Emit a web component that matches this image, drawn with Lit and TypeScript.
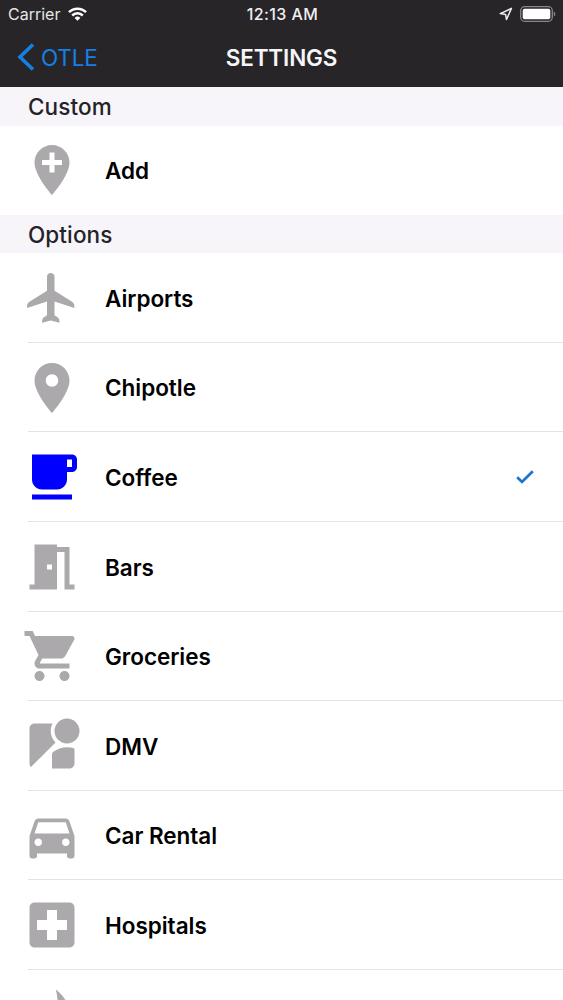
import { LitElement, html, css } from "lit";
import { customElement } from "lit/decorators.js";
import { classMap } from "lit/directives/class-map.js";

const icons: Record<string, string> = {
  add: "M12 2C8.14 2 5 5.14 5 9c0 5.25 7 13 7 13s7-7.75 7-13c0-3.86-3.14-7-7-7zm4 8h-3v3h-2v-3H8V8h3V5h2v3h3v2z",
  plane: "M21 16c0-1.5-.3-2.100-1.300-2.700L13 9.100V3.500C13 2.670 12.330 2 11.500 2S10 2.670 10 3.500v5.600l-6.700 4.200C2.300 13.900 2 14.500 2 16l8-2.600V18.900l-1.200.8c-.6.400-.8.900-.8 2.200l3.500-.9 3.500.9c0-1.300-.2-1.800-.8-2.200L13 18.900v-5.500z",
  pin: "M12 2C8.13 2 5 5.13 5 9c0 5.25 7 13 7 13s7-7.75 7-13c0-3.87-3.13-7-7-7zm0 9.5c-1.38 0-2.5-1.12-2.5-2.5s1.12-2.5 2.5-2.5 2.5 1.12 2.5 2.5-1.12 2.5-2.5 2.5z",
  cup: "M20 3H4v10c0 2.21 1.79 4 4 4h6c2.21 0 4-1.79 4-4v-3h2c1.11 0 2-.9 2-2V5c0-1.11-.89-2-2-2zm0 5h-2V5h2v3zM4 19h16v2H4z",
  door: "M14 6v15H3v-2h2V3h9v1h5v15h2v2h-4V6h-3zm-4 5v2h2v-2h-2z",
  cart: "M7 18c-1.1 0-1.99.9-1.99 2S5.9 22 7 22s2-.9 2-2-.9-2-2-2zM1 2v2h2l3.6 7.59-1.35 2.45c-.16.28-.25.61-.25.96 0 1.1.9 2 2 2h12v-2H7.42c-.14 0-.25-.11-.25-.25l.03-.12.9-1.63h7.45c.75 0 1.41-.41 1.75-1.03l3.58-6.49c.08-.14.12-.31.12-.48 0-.55-.45-1-1-1H5.21l-.94-2H1zm16 16c-1.1 0-1.99.9-1.99 2s.89 2 1.99 2 2-.9 2-2-.9-2-2-2z",
  person: "M12.56 14.33c-.34.27-.56.7-.56 1.17V21h7c1.1 0 2-.9 2-2v-5.98c-.94-.33-1.95-.52-3-.52-2.03 0-3.93.7-5.44 1.83zM23 6a5 5 0 1 1-10 0 5 5 0 0 1 10 0zM11.5 6c0-1.08.27-2.1.74-3H5c-1.1 0-2 .9-2 2v14c0 .55.23 1.05.59 1.41l9.82-9.82C12.23 9.42 11.5 7.8 11.5 6z",
  car: "M18.92 6.01C18.72 5.42 18.16 5 17.5 5h-11c-.66 0-1.21.42-1.42 1.01L3 12v8c0 .55.45 1 1 1h1c.55 0 1-.45 1-1v-1h12v1c0 .55.45 1 1 1h1c.55 0 1-.45 1-1v-8l-2.08-5.99zM6.5 16c-.83 0-1.5-.67-1.5-1.5S5.67 13 6.5 13s1.5.67 1.5 1.5S7.33 16 6.5 16zm11 0c-.83 0-1.5-.67-1.5-1.5s.67-1.5 1.5-1.5 1.5.67 1.5 1.5-.67 1.5-1.5 1.5zM5 11l1.500-4.500h11L19 11H5z",
  hospital: "M19 3H5c-1.1 0-1.99.9-1.99 2L3 19c0 1.1.9 2 2 2h14c1.1 0 2-.9 2-2V5c0-1.1-.9-2-2-2zm-1 11h-4v4h-4v-4H6v-4h4V6h4v4h4v4z",
  flame: "M13.5 1.67s.74 2.65.74 4.8c0 2.06-1.35 3.73-3.41 3.73-2.07 0-3.63-1.67-3.63-3.73l.03-.36C5.21 8.51 4 11.62 4 15c0 4.42 3.58 8 8 8s8-3.58 8-8C20 9.61 17.41 4.8 13.5 1.67z",
};

interface Option { label: string; icon: string; selected?: boolean }

const options: Option[] = [
  { label: "Airports", icon: "plane" },
  { label: "Chipotle", icon: "pin" },
  { label: "Coffee", icon: "cup", selected: true },
  { label: "Bars", icon: "door" },
  { label: "Groceries", icon: "cart" },
  { label: "DMV", icon: "person" },
  { label: "Car Rental", icon: "car" },
  { label: "Hospitals", icon: "hospital" },
  { label: "", icon: "flame" },
];

@customElement("app-root")
export class AppRoot extends LitElement {
  static styles = css`
    :host {
      display: block;
      height: 1000px;
      overflow: hidden;
      background: #fff;
      font-family: Inter, "Liberation Sans", sans-serif;
      color: #000;
    }
    .top { height: 87px; background: #272528; color: #fff; }
    .status, .nav { display: grid; grid-template-columns: 1fr auto 1fr; align-items: center; }
    .status { height: 28px; font-size: 16px; }
    .carrier { display: flex; align-items: center; gap: 8px; padding-left: 8px; }
    .carrier-name { letter-spacing: 0; color: #e6e6e8; }
    .time { font-weight: 500; color: #f0f0f2; padding-left: 2px; letter-spacing: 0.4px; }
    .indicators { display: flex; justify-content: flex-end; align-items: center; gap: 7px; padding-right: 7px; }
    .nav { height: 58px; }
    .back { display: flex; align-items: center; gap: 6px; padding-left: 17px; color: #1580e4; font-size: 22.5px; letter-spacing: -0.2px; }
    .title { font-size: 22.5px; font-weight: 600; color: #f6f6f8; letter-spacing: -0.15px; }
    .section {
      height: 38.6px;
      padding-left: 28px;
      background: #f7f5f9;
      color: #242327;
      font-size: 22.5px;
      font-weight: 500;
      letter-spacing: 0.1px;
      line-height: 40.6px;
    }
    .row {
      display: flex;
      align-items: center;
      height: 89.6px;
      padding-left: 22px;
      box-sizing: border-box;
    }
    .row.single { height: 89px; }
    .icon { width: 60px; height: 60px; fill: #aba9ac; flex: none; }
    .selected .icon { fill: #0000fe; }
    .label { margin-left: 23px; flex: 1; font-size: 22.5px; font-weight: 600; letter-spacing: -0.03px; padding-top: 0.6px; }
    .check { margin-right: 29.5px; }
    .line { height: 1px; margin: -1px 0 0 28px; background: #e3e3e5; }
    svg { display: block; }
  `;

  private row(o: Option, single = false) {
    return html`
      <div class=${classMap({ row: true, single, selected: !!o.selected })}>
        <svg class="icon" viewBox="0 0 24 24"><path d=${icons[o.icon]} /></svg>
        <span class="label">${o.label}</span>
        ${o.selected
          ? html`<svg class="check" width="18" height="14" viewBox="0 0 18 14">
              <path d="M1.200 7.300 6 11.900 16.800 1.200" fill="none" stroke="#1873d3" stroke-width="2.800" />
            </svg>`
          : null}
      </div>`;
  }

  render() {
    return html`
      <header class="top">
        <div class="status">
          <div class="carrier">
            <span class="carrier-name">Carrier</span>
            <svg width="19" height="14" viewBox="0 0 19 14" fill="none" stroke="#fff" stroke-width="2.500">
              <path d="M1 5.200a12 12 0 0 1 17 0M4.200 8.500a7.500 7.500 0 0 1 10.600 0" />
              <path d="M6.600 10.900a4.100 4.100 0 0 1 5.800 0L9.500 13.800z" fill="#fff" stroke="none" />
            </svg>
          </div>
          <span class="time">12:13 AM</span>
          <div class="indicators">
            <svg width="14" height="14" viewBox="0 0 14 14">
              <path d="M1.300 6.600 12.400 1.400 7.500 12.500 6.600 7.400z" fill="none" stroke="#eee" stroke-width="1.500" stroke-linejoin="round" />
            </svg>
            <svg width="36" height="16" viewBox="0 0 36 16">
              <rect x=".7" y=".7" width="31.600" height="14.600" rx="4" fill="none" stroke="#89878b" stroke-width="1.300" />
              <rect x="2.700" y="2.700" width="27.600" height="10.600" rx="2" fill="#fff" />
              <path d="M33.800 5.500c2 .8 2 4.200 0 5z" fill="#89878b" />
            </svg>
          </div>
        </div>
        <div class="nav">
          <div class="back">
            <svg width="18" height="28" viewBox="0 0 18 28">
              <path d="M16 1.500 3 14 16 26.500" fill="none" stroke="#1580e4" stroke-width="3.600" />
            </svg>
            <span>OTLE</span>
          </div>
          <span class="title">SETTINGS</span>
        </div>
      </header>
      <div class="section">Custom</div>
      ${this.row({ label: "Add", icon: "add" }, true)}
      <div class="section">Options</div>
      ${options.map((o, i) => html`${this.row(o)}${i < options.length - 1 ? html`<div class="line"></div>` : null}`)}
    `;
  }
}
